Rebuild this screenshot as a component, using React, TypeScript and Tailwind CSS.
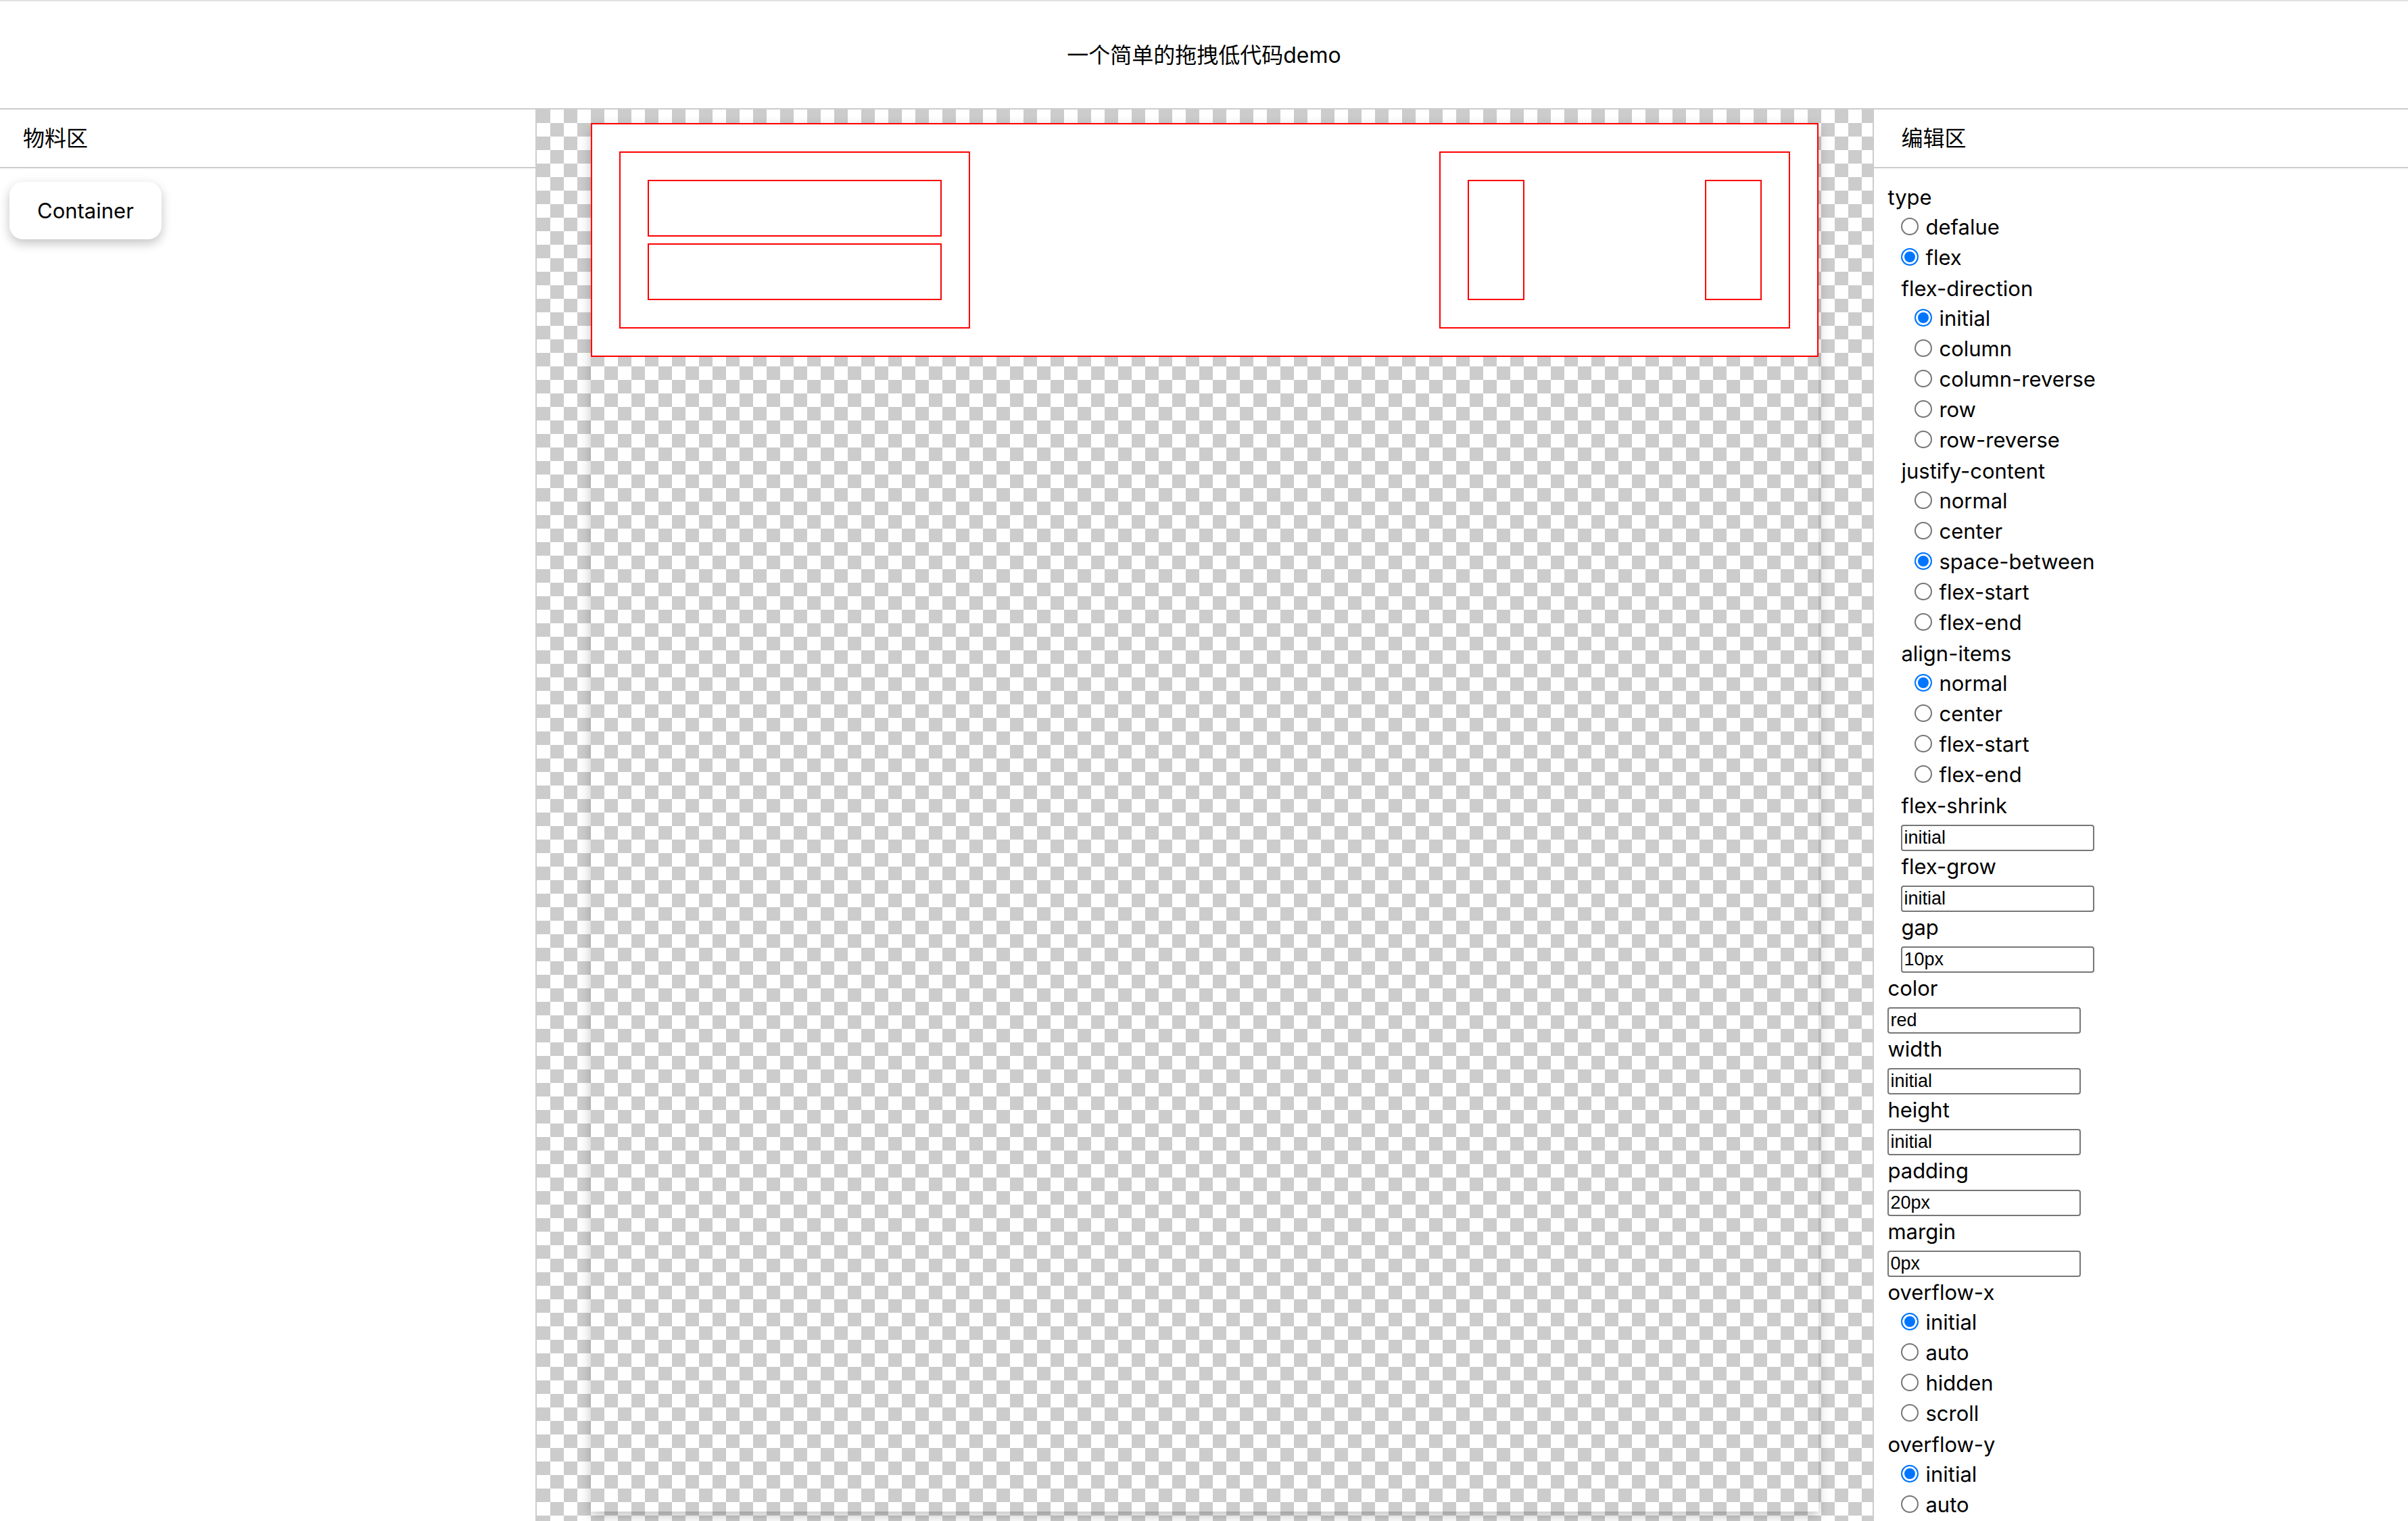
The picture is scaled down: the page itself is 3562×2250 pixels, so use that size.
import { useState, type ReactNode } from "react";

type RadioFieldProps = { name: string; options: string[]; initial: string };

function RadioField({ name, options, initial }: RadioFieldProps) {
  const [value, setValue] = useState(initial);
  return (
    <fieldset>
      <legend className="block leading-[45px]">{name}</legend>
      <div className="pl-5">
        {options.map((option) => (
          <label key={option} className="flex h-[45px] items-center gap-[10px]">
            <input
              type="radio"
              name={name}
              value={option}
              checked={value === option}
              onChange={() => setValue(option)}
              className="mb-1 size-[26px] shrink-0 appearance-none rounded-full border-2 border-[#767676] bg-white checked:border-[#0075ff] checked:bg-[#0075ff] checked:shadow-[inset_0_0_0_3px_white]"
            />
            {option}
          </label>
        ))}
      </div>
    </fieldset>
  );
}

function TextField({ name, initial }: { name: string; initial: string }) {
  const [value, setValue] = useState(initial);
  return (
    <label className="block">
      <span className="block leading-[45px]">{name}</span>
      <span className="flex h-[45px] items-end">
        <input
          type="text"
          value={value}
          onChange={(e) => setValue(e.target.value)}
          className="h-[39px] w-[286px] rounded-[4px] border-2 border-[#767676] bg-white px-[2px] font-['Liberation_Sans',sans-serif] text-[27px] leading-[30px] text-black"
        />
      </span>
    </label>
  );
}

function PanelTitle({ children, className }: { children: ReactNode; className: string }) {
  return (
    <h2 className={`border-b-2 border-[#ccc] py-5 text-[32px] leading-[45px] ${className}`}>{children}</h2>
  );
}

function Box({ className, children }: { className?: string; children?: ReactNode }) {
  return <div className={`border-2 border-[#f00] bg-white p-10 ${className ?? ""}`}>{children}</div>;
}

export default function App() {
  return (
    <div className="flex h-screen flex-col overflow-hidden bg-white font-['Inter','Noto_Sans_CJK_SC',sans-serif] text-[31px] text-black">
      <header className="flex h-[162px] shrink-0 items-center justify-center border-y-2 border-t-[#e1e1e1] border-b-[#ccc]">
        <h1 className="text-[32px] leading-[45px]">一个简单的拖拽低代码demo</h1>
      </header>

      <div className="grid min-h-0 flex-1 grid-cols-[2fr_5fr_2fr]">
        <aside>
          <PanelTitle className="pl-[34px]">物料区</PanelTitle>
          <div className="px-[14px] py-5">
            <button
              type="button"
              draggable
              className="rounded-[20px] bg-white px-[41px] py-5 leading-[45px] shadow-[0_6px_16px_rgba(0,0,0,0.24)]"
            >
              Container
            </button>
          </div>
        </aside>

        <main className="flex flex-col border-l-2 border-[#ccc] bg-[conic-gradient(#fff_25%,#ccc_0_50%,#fff_0_75%,#ccc_0)] bg-size-[40px_40px] px-20 pt-5 pb-[14px]">
          <div className="flex-1 shadow-[0_6px_16px_rgba(0,0,0,0.24)]">
            <Box className="flex justify-between">
              <Box className="flex w-[30%] flex-col gap-[10px]">
                <Box />
                <Box />
              </Box>
              <Box className="flex w-[30%] justify-between">
                <Box />
                <Box />
              </Box>
            </Box>
          </div>
        </main>

        <aside className="border-l-2 border-[#ccc]">
          <PanelTitle className="pl-10">编辑区</PanelTitle>
          <form className="px-5 pt-5">
            <RadioField name="type" options={["defalue", "flex"]} initial="flex" />
            <div className="pl-5">
              <RadioField
                name="flex-direction"
                options={["initial", "column", "column-reverse", "row", "row-reverse"]}
                initial="initial"
              />
              <RadioField
                name="justify-content"
                options={["normal", "center", "space-between", "flex-start", "flex-end"]}
                initial="space-between"
              />
              <RadioField
                name="align-items"
                options={["normal", "center", "flex-start", "flex-end"]}
                initial="normal"
              />
              <TextField name="flex-shrink" initial="initial" />
              <TextField name="flex-grow" initial="initial" />
              <TextField name="gap" initial="10px" />
            </div>
            <TextField name="color" initial="red" />
            <TextField name="width" initial="initial" />
            <TextField name="height" initial="initial" />
            <TextField name="padding" initial="20px" />
            <TextField name="margin" initial="0px" />
            <RadioField name="overflow-x" options={["initial", "auto", "hidden", "scroll"]} initial="initial" />
            <RadioField name="overflow-y" options={["initial", "auto"]} initial="initial" />
          </form>
        </aside>
      </div>
    </div>
  );
}
